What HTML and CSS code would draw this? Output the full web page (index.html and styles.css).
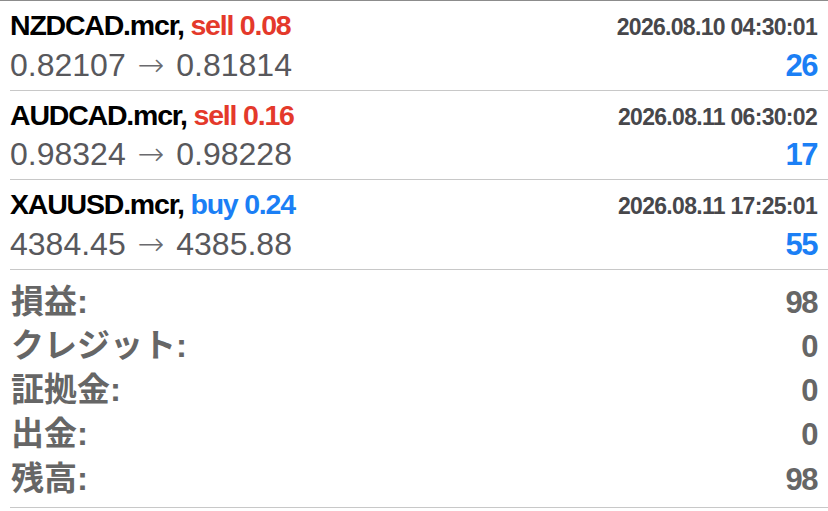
FILE: index.html
```html
<!DOCTYPE html>
<html>
<head>
<meta charset="utf-8">
<meta name="viewport" content="width=device-width, initial-scale=1">
<title>History</title>
<link rel="stylesheet" href="styles.css">
</head>
<body>
<main class="history">
  <div class="trade">
    <div class="symbol">NZDCAD.mcr, <span class="sell">sell 0.08</span></div>
    <div class="time">2026.08.10 04:30:01</div>
    <div class="prices">0.82107 <span class="arrow">&rarr;</span> 0.81814</div>
    <div class="profit">26</div>
  </div>
  <div class="trade">
    <div class="symbol">AUDCAD.mcr, <span class="sell">sell 0.16</span></div>
    <div class="time">2026.08.11 06:30:02</div>
    <div class="prices">0.98324 <span class="arrow">&rarr;</span> 0.98228</div>
    <div class="profit">17</div>
  </div>
  <div class="trade">
    <div class="symbol">XAUUSD.mcr, <span class="buy">buy 0.24</span></div>
    <div class="time">2026.08.11 17:25:01</div>
    <div class="prices">4384.45 <span class="arrow">&rarr;</span> 4385.88</div>
    <div class="profit">55</div>
  </div>

  <div class="summary">
    <div class="line"><span class="label">損益:</span><span class="value">98</span></div>
    <div class="line"><span class="label">クレジット:</span><span class="value">0</span></div>
    <div class="line"><span class="label">証拠金:</span><span class="value">0</span></div>
    <div class="line"><span class="label">出金:</span><span class="value">0</span></div>
    <div class="line"><span class="label">残高:</span><span class="value">98</span></div>
  </div>
</main>
</body>
</html>
```

FILE: styles.css
```css
* {box-sizing: border-box}

body {
 margin: 0;
 background: #fff;
 font-family: "Liberation Sans", "Noto Sans CJK JP", sans-serif;
 border-top: 1px solid #8c8c8c;
}

.history {
 padding-left: 10px;
}

.trade {
 display: grid;
 grid-template-columns: 1fr auto;
 align-items: baseline;
 row-gap: 0;
 padding: 7px 11px 0 0;
 border-bottom: 1px solid #c8c8c8;
 height: 89.5px;
}

.symbol {
 font-size: 28.5px;
 line-height: 34px;
 font-weight: bold;
 letter-spacing: -1.2px;
 color: #000;
}

.sell {
 color: #e4392b;
}

.buy {
 color: #1b7ff5;
}

.time {
 font-size: 23px;
 font-weight: bold;
 letter-spacing: -0.7px;
 color: #47474b;
 text-align: right;
}

.prices {
 font-size: 32px;
 line-height: 34px;
 word-spacing: 3px;
 color: #58585c;
}

.arrow {
 font-family: "DejaVu Sans", sans-serif;
 font-weight: 200;
 color: #6a6a6e;
}

.profit {
 font-size: 31px;
 font-weight: bold;
 letter-spacing: -1.5px;
 color: #1b7ff5;
 text-align: right;
}

.summary {
 padding: 10px 11px 6px 0;
 border-bottom: 1px solid #c8c8c8;
}

.line {
 display: flex;
 justify-content: space-between;
 align-items: baseline;
 height: 44.3px;
 line-height: 44px;
 color: #666;
 font-weight: bold;
}

.label {
 font-size: 33px;
 padding-left: 1px;
}

.value {
 font-size: 31px;
 letter-spacing: -1.5px;
}
```
